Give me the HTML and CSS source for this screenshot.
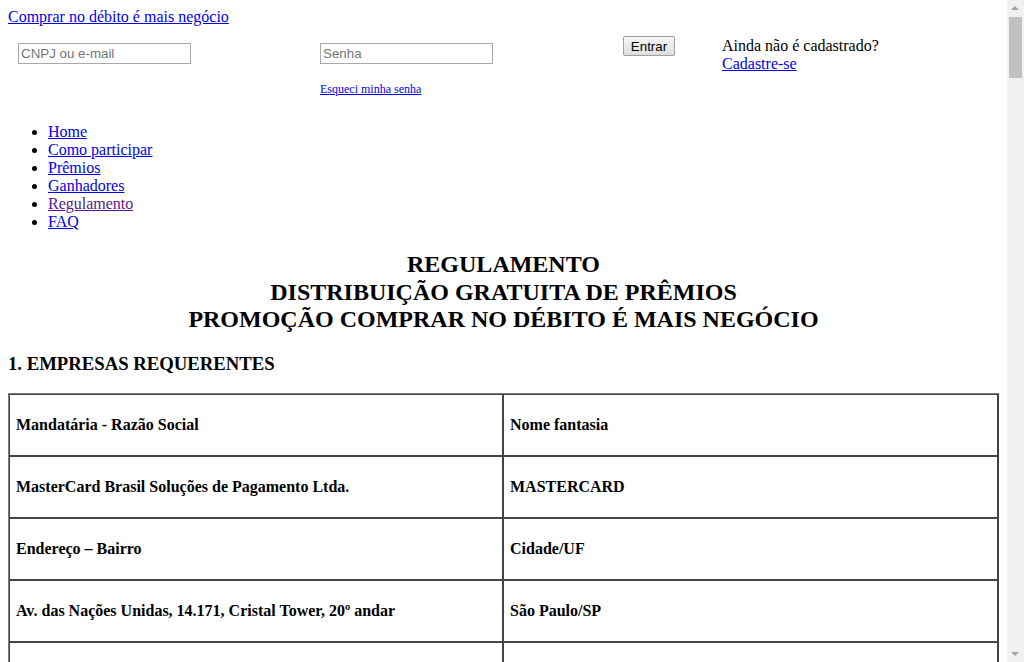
FILE: index.html
```html
<!DOCTYPE html>
<html lang="pt-BR">
<head>
<meta charset="utf-8">
<title>Regulamento - Comprar no débito é mais negócio</title>
<link rel="stylesheet" href="styles.css">
</head>
<body>
<div class="pagina">
<header class="topo">
  <a class="marca" href="#">Comprar no débito é mais negócio</a>
  <form class="login">
    <div class="col col-user">
      <input class="campo" type="text" placeholder="CNPJ ou e-mail">
    </div>
    <div class="col col-senha">
      <input class="campo" type="password" placeholder="Senha">
      <a class="esqueci" href="#">Esqueci minha senha</a>
    </div>
    <div class="col col-botao">
      <button class="entrar" type="button">Entrar</button>
    </div>
    <div class="col col-cadastro">
      <span>Ainda não é cadastrado?</span><br>
      <a href="#">Cadastre-se</a>
    </div>
  </form>
</header>
<nav>
  <ul class="menu">
    <li><a href="#">Home</a></li>
    <li><a href="#">Como participar</a></li>
    <li><a href="#">Prêmios</a></li>
    <li><a href="#">Ganhadores</a></li>
    <li><a class="visitado" href="#">Regulamento</a></li>
    <li><a href="#">FAQ</a></li>
  </ul>
</nav>
<main>
  <h2 class="titulo">REGULAMENTO<br>DISTRIBUIÇÃO GRATUITA DE PRÊMIOS<br>PROMOÇÃO COMPRAR NO DÉBITO É MAIS NEGÓCIO</h2>
  <h3 class="secao">1. EMPRESAS REQUERENTES</h3>
  <table class="tabela">
    <tr><td><p>Mandatária - Razão Social</p></td><td><p>Nome fantasia</p></td></tr>
    <tr><td><p>MasterCard Brasil Soluções de Pagamento Ltda.</p></td><td><p>MASTERCARD</p></td></tr>
    <tr><td><p>Endereço – Bairro</p></td><td><p>Cidade/UF</p></td></tr>
    <tr><td><p>Av. das Nações Unidas, 14.171, Cristal Tower, 20º andar</p></td><td><p>São Paulo/SP</p></td></tr>
    <tr><td><p>CNPJ/MF</p></td><td><p>05.577.343/0001-37</p></td></tr>
    <tr><td><p>Aderente - Razão Social</p></td><td><p>Nome fantasia</p></td></tr>
  </table>
</main>
</div>
<div class="rolagem" aria-hidden="true">
  <div class="seta seta-cima"></div>
  <div class="polegar"></div>
  <div class="seta seta-baixo"></div>
</div>
</body>
</html>
```
FILE: styles.css
```css
html, body {
  margin: 0;
  padding: 0;
}
body {
  font-family: "Liberation Serif", "Times New Roman", serif;
  font-size: 16px;
  color: #000;
  background: #fff;
}
.pagina {
  margin: 8px 25px 8px 8px;
}
a { color: #0000ee; }
a.visitado { color: #551a8b; }

.marca {
  display: inline-block;
  line-height: 18px;
}

.login {
  display: grid;
  grid-template-columns: 312px 303px 99px 1fr;
  margin-top: 11px;
}
.col { display: flex; flex-direction: column; align-items: flex-start; }
.col-user { padding-left: 10px; padding-top: 6px; }
.col-senha { padding-top: 6px; }
.campo {
  box-sizing: border-box;
  width: 173px;
  height: 21px;
  margin: 0;
  padding: 1px 2px;
  border: 1px solid #a9a9a9;
  font-family: Arial, "Liberation Sans", sans-serif;
  font-size: 13.33px;
  color: #000;
}
.campo::placeholder { color: #757575; }
.esqueci {
  font-size: 12px;
  margin-top: 18px;
  line-height: 14px;
}
.entrar {
  box-sizing: border-box;
  width: 52px;
  height: 20px;
  margin: -1px 0 0;
  padding: 0 6px;
  font-family: Arial, "Liberation Sans", sans-serif;
  font-size: 13.33px;
  color: #000;
  border: 1px solid #a0a0a0;
  border-radius: 2px;
  background: linear-gradient(#f6f6f6, #dedede);
}
.col-cadastro {
  display: block;
  line-height: 18px;
}

.menu {
  margin: 27px 0 16px;
  padding-left: 40px;
  line-height: 18px;
}

.titulo {
  text-align: center;
  font-size: 24px;
  line-height: 27.6px;
  margin: 0;
  padding-top: 4px;
}
.secao {
  font-size: 18.72px;
  line-height: 22px;
  margin: 19px 0 18px;
}

.tabela {
  width: 100%;
  table-layout: fixed;
  border-collapse: separate;
  border-spacing: 0;
  border: 1px solid #7a7a7a;
  border-right-color: #404040;
  border-bottom-color: #404040;
}
.tabela td {
  border: 1px solid #444;
  padding: 0 6px;
  vertical-align: middle;
  height: 60px;
}
.tabela td:first-child {
  width: 480px;
}
.tabela p {
  margin: 0;
  font-weight: bold;
  font-size: 16px;
  line-height: 18px;
}

.rolagem {
  position: fixed;
  top: 0;
  right: 0;
  bottom: 0;
  width: 17px;
  background: #f1f1f1;
}
.polegar {
  position: absolute;
  top: 17px;
  left: 2px;
  width: 13px;
  height: 61px;
  background: #c1c1c1;
}
.seta {
  position: absolute;
  left: 4px;
  width: 0;
  height: 0;
  border-left: 4px solid transparent;
  border-right: 4px solid transparent;
}
.seta-cima {
  top: 6px;
  border-bottom: 4px solid #a3a3a3;
}
.seta-baixo {
  bottom: 6px;
  border-top: 4px solid #a3a3a3;
}
```
